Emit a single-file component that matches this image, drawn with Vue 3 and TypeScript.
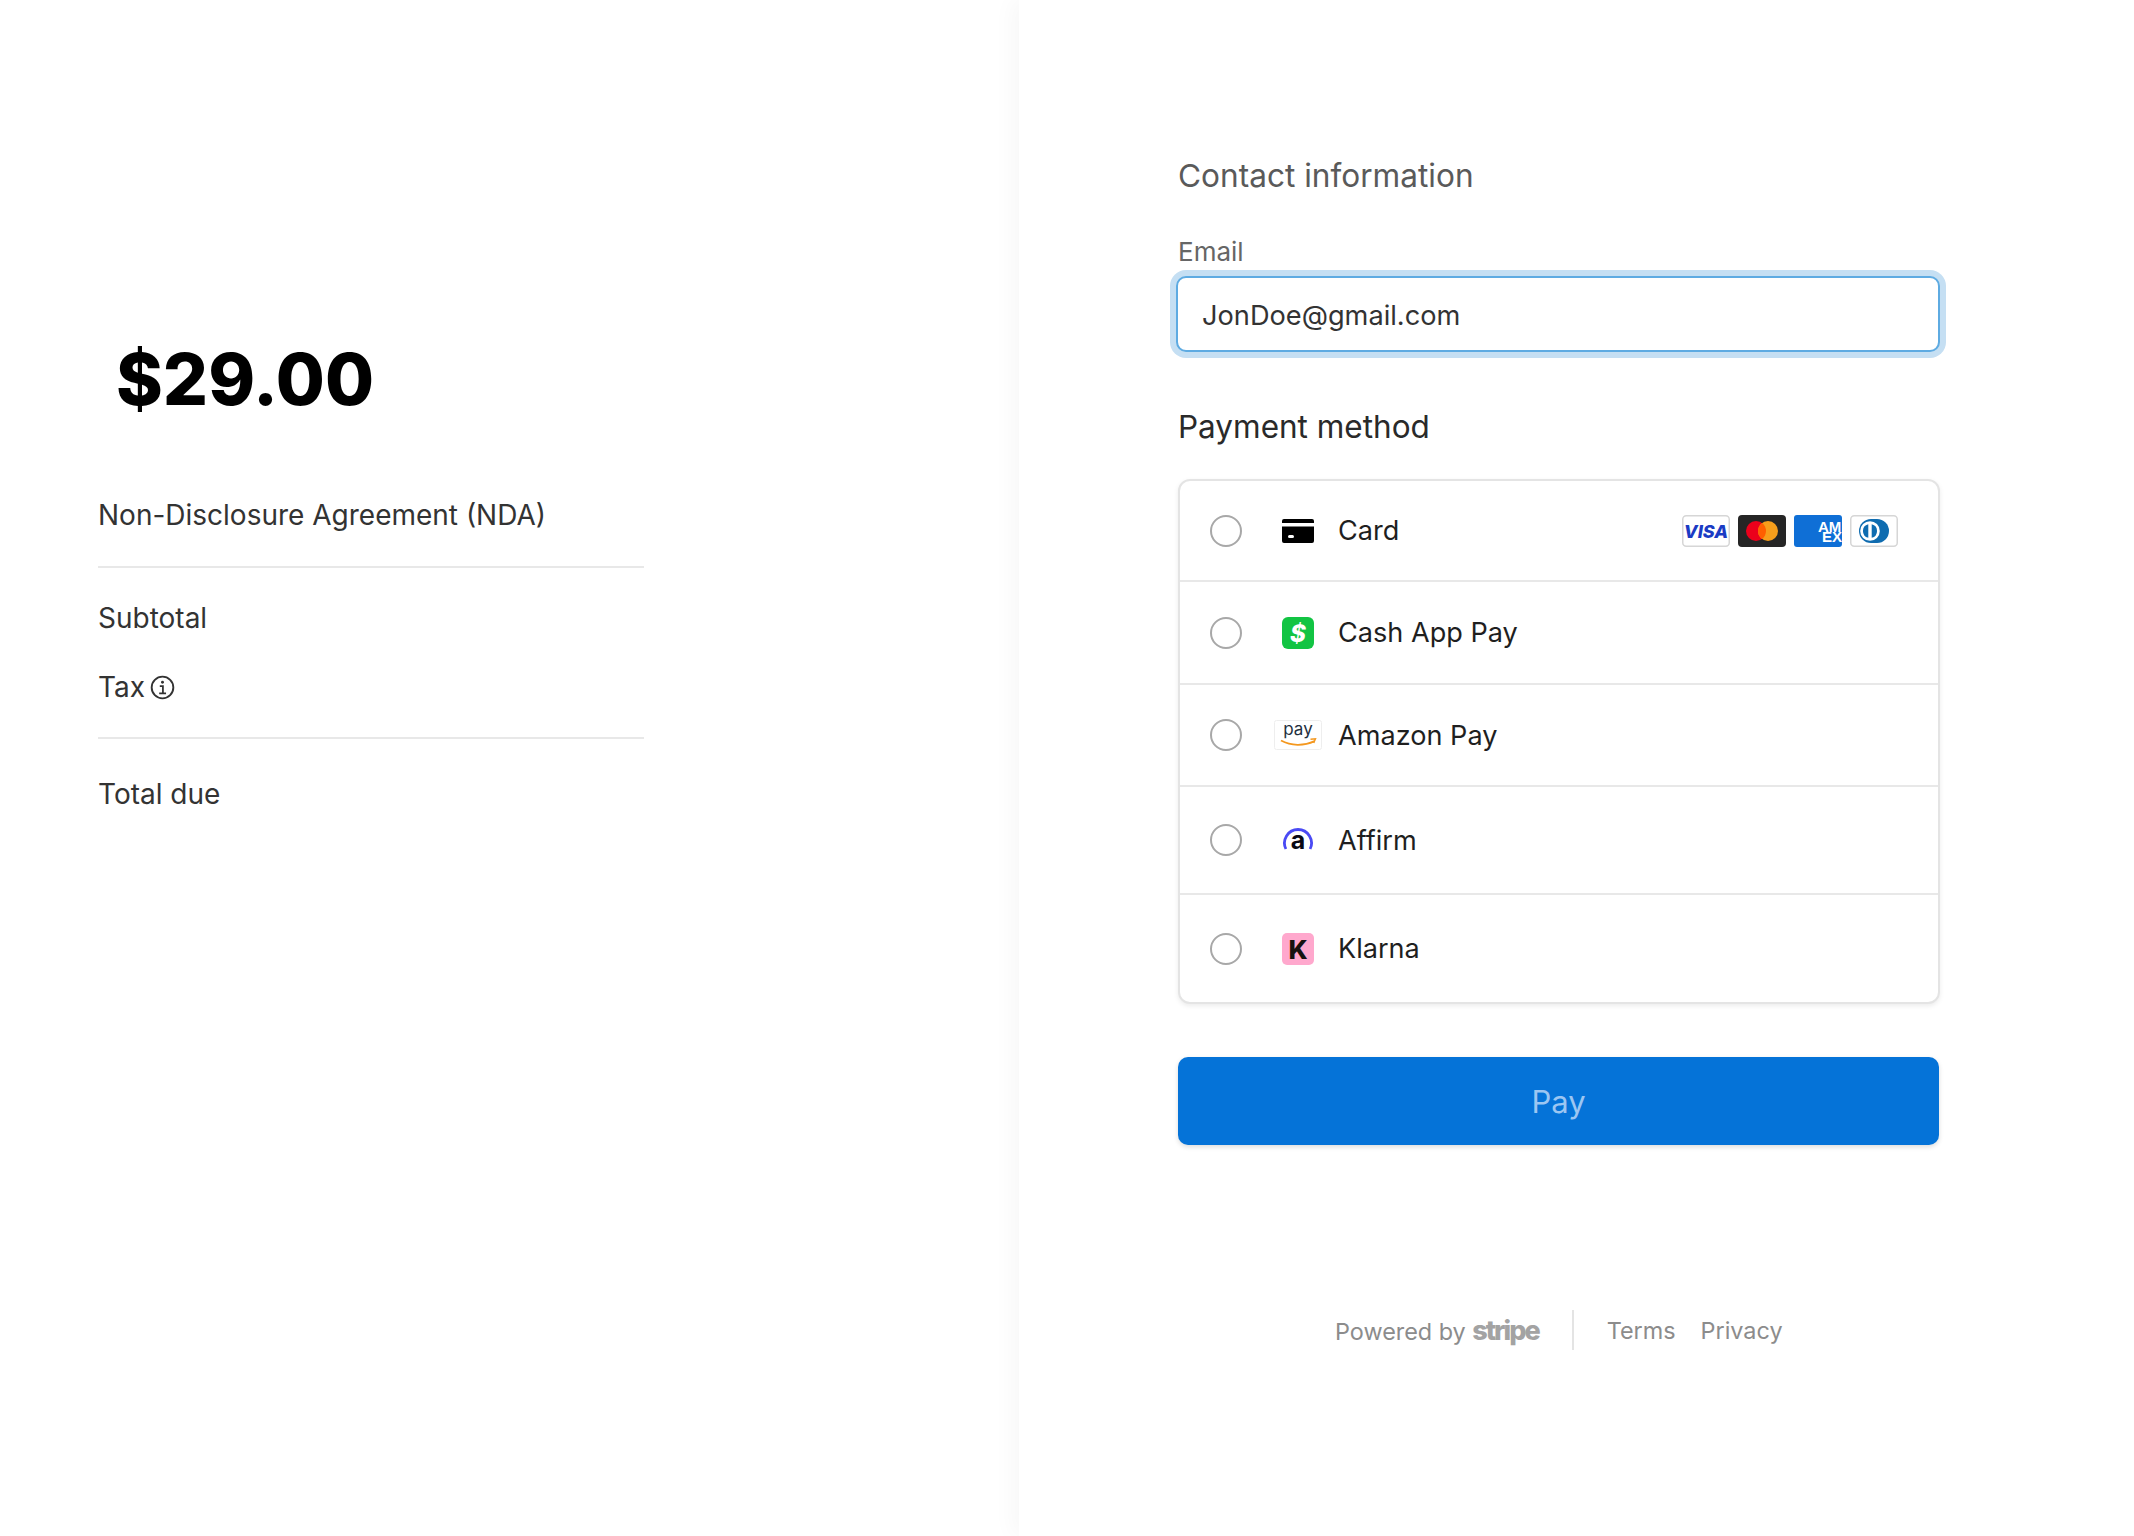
<script setup lang="ts">
interface Method {
  id: string
  label: string
  height: number
}

const methods: Method[] = [
  { id: 'card', label: 'Card', height: 101 },
  { id: 'cash', label: 'Cash App Pay', height: 103 },
  { id: 'amazon', label: 'Amazon Pay', height: 102 },
  { id: 'affirm', label: 'Affirm', height: 108 },
  { id: 'klarna', label: 'Klarna', height: 107 },
]
</script>

<template>
  <div class="page">
    <section class="summary">
      <div class="amount">$29.00</div>
      <div class="group">
        <div class="line">Non-Disclosure Agreement (NDA)</div>
      </div>
      <div class="group totals">
        <div class="line">Subtotal</div>
        <div class="line tax">
          Tax
          <svg class="info" viewBox="0 0 24 24" fill="none" stroke="#333" stroke-width="1.8">
            <circle cx="12" cy="12" r="10.400" />
            <path d="M9.400 10.600h3v7M8.800 17.600h6.600" stroke-width="1.700" />
            <circle cx="12" cy="7" r="1.400" fill="#333" stroke="none" />
          </svg>
        </div>
      </div>
      <div class="line total">Total due</div>
    </section>

    <main class="checkout">
      <div class="form">
        <h2 class="contact-title">Contact information</h2>
        <div class="field-label">Email</div>
        <div class="email">JonDoe@gmail.com</div>
        <h2 class="pay-title">Payment method</h2>

        <div class="methods">
          <div v-for="m in methods" :key="m.id" class="method" :style="{ height: m.height + 'px' }">
            <span class="radio"></span>
            <span class="icon-slot">
              <svg v-if="m.id === 'card'" width="32" height="24" viewBox="0 0 32 24">
                <path fill="#000" d="M2 0h28a2 2 0 0 1 2 2v2H0V2a2 2 0 0 1 2-2zM0 7.500h32V22a2 2 0 0 1-2 2H2a2 2 0 0 1-2-2z" />
                <rect x="6" y="16" width="6" height="3" rx="1.500" fill="#fff" />
              </svg>
              <svg v-else-if="m.id === 'cash'" width="32" height="32" viewBox="0 0 32 32">
                <rect width="32" height="32" rx="6" fill="#12c443" />
                <text x="16" y="24.500" text-anchor="middle" class="cash-text">$</text>
              </svg>
              <svg v-else-if="m.id === 'amazon'" width="48" height="30" viewBox="0 0 48 30">
                <rect x="0.500" y="0.500" width="47" height="29" rx="2" fill="#fff" stroke="#eeeeee" />
                <text x="24" y="15" text-anchor="middle" class="amazon-text">pay</text>
                <path d="M7 20.500c10 5.600 23 5.600 33.500 .6" fill="none" stroke="#f4981f" stroke-width="1.800" />
                <path d="M36.500 19.300l5 -0.500l-1.800 4.300" fill="none" stroke="#f4981f" stroke-width="1.400" />
              </svg>
              <svg v-else-if="m.id === 'affirm'" width="32" height="32" viewBox="0 0 32 32">
                <path d="M3.900 25A13.500 13.500 0 1 1 28.100 25" fill="none" stroke="#4a4af4" stroke-width="2.800" />
                <text x="16" y="25.300" text-anchor="middle" class="affirm-text">a</text>
              </svg>
              <svg v-else width="32" height="32" viewBox="0 0 32 32">
                <rect width="32" height="32" rx="5" fill="#ffa8cd" />
                <text x="16" y="25.500" text-anchor="middle" class="klarna-text">K</text>
              </svg>
            </span>
            <span class="method-label">{{ m.label }}</span>

            <span v-if="m.id === 'card'" class="brands">
              <svg width="48" height="32" viewBox="0 0 48 32">
                <rect x="0.750" y="0.750" width="46.500" height="30.500" rx="3.500" fill="#fff" stroke="#d6d6d6" stroke-width="1.500" />
                <text x="24" y="22.500" text-anchor="middle" class="visa-text">VISA</text>
              </svg>
              <svg width="48" height="32" viewBox="0 0 48 32">
                <rect width="48" height="32" rx="4" fill="#252525" />
                <circle cx="18" cy="16" r="10" fill="#eb001b" />
                <circle cx="30" cy="16" r="10" fill="#f79e1b" />
                <path d="M24 8a10 10 0 0 1 0 16a10 10 0 0 1 0-16z" fill="#ff5f00" />
              </svg>
              <svg width="48" height="32" viewBox="0 0 48 32">
                <rect width="48" height="32" rx="3" fill="#0f6fd6" />
                <text class="amex-text"><tspan x="24" y="16.500">AM</tspan><tspan x="28" y="26.800">EX</tspan></text>
              </svg>
              <svg width="48" height="32" viewBox="0 0 48 32">
                <rect x="0.750" y="0.750" width="46.500" height="30.500" rx="3.500" fill="#fff" stroke="#d6d6d6" stroke-width="1.500" />
                <rect x="9" y="4" width="30" height="24" rx="12" fill="#0f6cb0" />
                <circle cx="20" cy="16" r="9.800" fill="#fff" />
                <path d="M18.300 9.200a7 7 0 0 0 0 13.600zM21.700 9.200a7 7 0 0 1 0 13.600z" fill="#0f6cb0" />
              </svg>
            </span>
          </div>
        </div>

        <button class="pay" type="button">Pay</button>

        <footer class="legal">
          <span class="powered">Powered by <b class="stripe">stripe</b></span>
          <span class="divider"></span>
          <span class="link">Terms</span>
          <span class="link">Privacy</span>
        </footer>
      </div>
    </main>
  </div>
</template>

<style>
html,
body {
  margin: 0;
  background: #fff;
}
</style>

<style scoped>
.page {
  display: flex;
  width: 2134px;
  height: 1536px;
  overflow: hidden;
  background: #fff;
  font-family: Inter, "Liberation Sans", sans-serif;
  color: #333;
}

.summary {
  box-sizing: border-box;
  width: 1019px;
  flex: none;
  padding: 339px 375px 0 98px;
}

.amount {
  height: 80px;
  padding-left: 18px;
  margin-bottom: 78px;
  font-size: 71px;
  line-height: 80px;
  font-weight: 800;
  color: #000;
}

.line {
  height: 36px;
  font-size: 28px;
  line-height: 36px;
  white-space: nowrap;
}

.group {
  padding-bottom: 33px;
  margin-bottom: 32px;
  border-bottom: 2px solid #e8e8e8;
}

.totals {
  padding-bottom: 32px;
  margin-bottom: 37px;
}

.tax {
  display: flex;
  align-items: center;
  gap: 5px;
  margin-top: 33px;
}

.info {
  width: 25px;
  height: 25px;
}

.checkout {
  position: relative;
  flex: 1;
  padding: 156px 0 0 159px;
  background: #fff;
  box-shadow: -6px 0 22px rgba(0, 0, 0, 0.035);
}

.form {
  width: 763px;
}

h2 {
  margin: 0;
  font-weight: 400;
  line-height: 40px;
  height: 40px;
}

.contact-title {
  margin-bottom: 40px;
  font-size: 31.600px;
  color: #5a5a5a;
}

.field-label {
  height: 32px;
  margin-bottom: 8px;
  font-size: 26px;
  line-height: 32px;
  color: #666;
}

.email {
  box-sizing: border-box;
  width: 764px;
  height: 76px;
  margin: 0 0 55px -2px;
  padding-left: 24px;
  border: 2px solid #5eabe2;
  border-radius: 10px;
  box-shadow: 0 0 0 6px #c5dff3;
  background: #fff;
  font-size: 27.200px;
  line-height: 75px;
  color: #333;
}

.pay-title {
  margin-bottom: 32px;
  font-size: 31.500px;
  color: #2a2a2a;
}

.methods {
  box-sizing: border-box;
  width: 762px;
  border: 2px solid #e4e4e4;
  border-radius: 12px;
  box-shadow: 0 2px 5px rgba(0, 0, 0, 0.08);
  overflow: hidden;
  background: #fff;
}

.method {
  box-sizing: border-box;
  display: flex;
  align-items: center;
  padding: 0 40px 0 30px;
  border-bottom: 2px solid #e8e8e8;
}

.method:last-child {
  border-bottom: 0;
}

.radio {
  box-sizing: border-box;
  flex: none;
  width: 32px;
  height: 32px;
  border: 2px solid #a8a8a8;
  border-radius: 50%;
}

.icon-slot {
  flex: none;
  width: 48px;
  margin: 0 16px 0 32px;
  display: flex;
  justify-content: center;
}

.icon-slot svg,
.brands svg {
  display: block;
  flex: none;
}

.method-label {
  font-size: 27.100px;
  color: #1f1f1f;
}

.brands {
  display: flex;
  gap: 8px;
  margin-left: auto;
}

.cash-text {
  font: italic 800 24px Inter, sans-serif;
  fill: #fff;
}

.amazon-text {
  font: 400 17px Inter, sans-serif;
  fill: #232f3e;
}

.affirm-text {
  font: 700 25px Inter, sans-serif;
  fill: #0a0a14;
}

.klarna-text {
  font: 800 26px Inter, sans-serif;
  fill: #17120f;
}

.visa-text {
  font: italic 800 18px Inter, sans-serif;
  fill: #1a3bc4;
}

.amex-text {
  font: 700 15px "Liberation Sans", sans-serif;
  fill: #fff;
}

.pay {
  display: block;
  width: 761px;
  height: 88px;
  margin: 53px 0 165px;
  padding: 0;
  border: 0;
  border-radius: 10px;
  background: #0573d8;
  box-shadow: 0 2px 5px rgba(0, 0, 0, 0.14);
  font-family: inherit;
  font-size: 31px;
  font-weight: 400;
  color: #9cc6f2;
}

.legal {
  display: flex;
  align-items: center;
  height: 40px;
  padding-left: 157px;
  font-size: 23.400px;
  color: #8c8c8c;
}

.stripe {
  font-size: 27px;
  font-weight: 800;
  letter-spacing: -2px;
  color: #a3a3a3;
}

.divider {
  width: 2px;
  height: 40px;
  margin: 0 33px;
  background: #e4e4e4;
}

.link + .link {
  margin-left: 25px;
}
</style>
